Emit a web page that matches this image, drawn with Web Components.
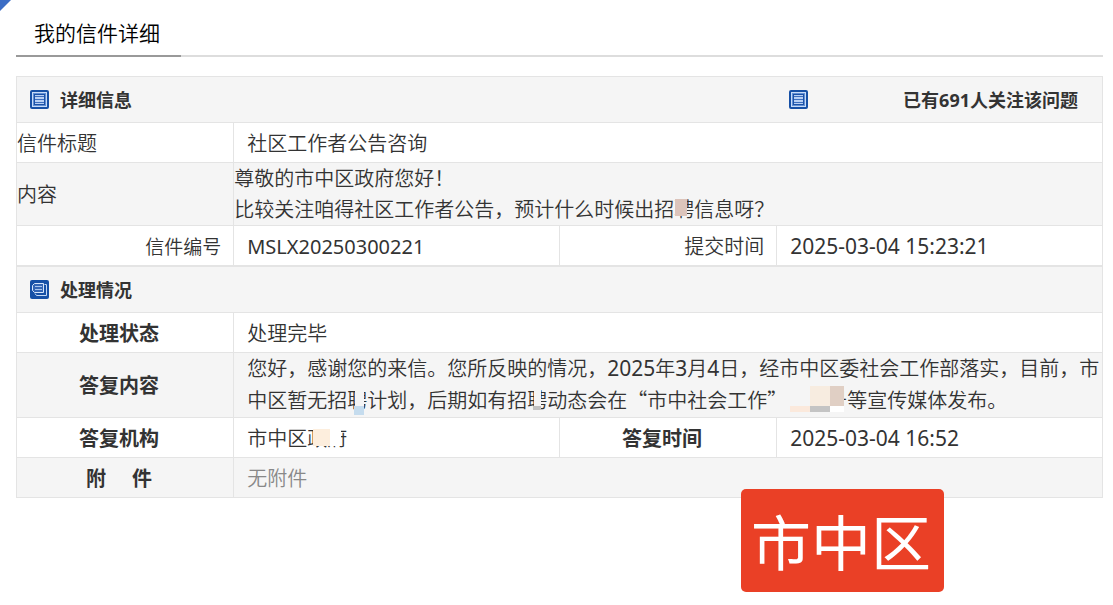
<!DOCTYPE html>
<html lang="zh-CN">
<head>
<meta charset="utf-8">
<title>我的信件详细</title>
<style>
  body { margin: 0; background: #fff; color: #333; font-family: "Noto Sans", "Noto Sans CJK SC", sans-serif; font-size: 20px; line-height: 32px; }
</style>
</head>
<body>
<letter-page>
  <page-title slot="title">我的信件详细</page-title>
  <letter-detail></letter-detail>
  <letter-reply></letter-reply>
  <area-badge slot="badge">市中区</area-badge>
</letter-page>

<script>
const define = (name, html) => customElements.define(name, class extends HTMLElement {
  constructor() {
    super();
    const t = document.createElement('template');
    t.innerHTML = html;
    this.attachShadow({ mode: 'open' }).append(t.content.cloneNode(true));
  }
});

const tableStyle = `<style>
  :host { display: block; }
  table { width: 100%; table-layout: fixed; border-spacing: 0; border: solid #e4e4e4; border-width: 1px 0 0 1px; }
  th, td { box-sizing: border-box; height: 40px; padding: 2px 0 0 13px; border: solid #e4e4e4; border-width: 0 1px 1px 0; text-align: left; font-weight: 350; overflow-wrap: anywhere; }
  tr.head th { height: 46px; padding-top: 0; background: #f5f5f5; border-right-width: 0; font-size: 18px; font-weight: 700; }
  tr.head th:last-child { border-right-width: 1px; padding-left: 12px; }
  tr.head th:first-child { padding-left: 13px; }
  tr.shade > * { background: #f5f5f5; }
  .bar { display: flex; align-items: center; gap: 11px; }
  .bar.apart { justify-content: space-between; padding-right: 24px; }
  th.flush { padding: 2px 0 0; }
  td.message { padding: 0; line-height: 31px; }
  td.reply { padding-top: 0; }
  th.right { text-align: right; padding: 2px 12px 0 0; }
  th.label { text-align: center; font-weight: 700; padding: 2px 12px 0 0; }
  .small { font-size: 19px; }
  .code { font-weight: 400; }
  .digits, time { font-size: 21px; font-weight: 400; line-height: 20px; }
  .quote { font-family: "Noto Sans CJK SC", sans-serif; line-height: 20px; }
  .none { color: #888; }
</style>
<table><colgroup><col style="width:20%"><col style="width:30%"><col style="width:20%"><col style="width:30%"></colgroup>`;

define('letter-page', `<style>
  :host { display: block; position: relative; box-sizing: border-box; min-height: 100vh; padding: 12px 10px 12px 16px; }
  .corner { position: absolute; left: 0; top: 0; width: 11px; height: 11px; background: #3c6dc5; clip-path: polygon(0 0, 100% 0, 0 100%); }
  main { padding-top: 19px; }
</style>
<div class="corner"></div>
<slot name="title"></slot>
<main><slot></slot></main>
<slot name="badge"></slot>`);

define('page-title', `<style>
  :host { display: flex; border-bottom: 2px solid #ddd; }
  h1 { margin: 0 0 -2px; padding: 5px 21px 6px 18px; border-bottom: 2px solid #999; font-size: 21px; line-height: 32px; font-weight: 350; color: #000; }
</style><h1><slot></slot></h1>`);

define('list-icon', `<style>:host { display: block; flex: none; width: 19px; height: 19px; } svg { display: block; }</style>
<svg width="19" height="19" viewBox="0 0 19 19" fill="none">
  <rect width="19" height="19" rx="2" fill="#1650a6"/>
  <rect x="2.5" y="2.5" width="14" height="14" fill="#5f8fd6" stroke="#c8dcf8"/>
  <rect x="4.5" y="4.5" width="10" height="10" fill="#b8d0f4" stroke="#1c51a5"/>
  <path d="M5 6.5h9M5 9.5h9M5 12.5h9" stroke="#3c6fc0"/>
</svg>`);

define('stack-icon', `<style>:host { display: block; flex: none; width: 19px; height: 19px; } svg { display: block; }</style>
<svg width="19" height="19" viewBox="0 0 19 19" fill="none">
  <rect width="19" height="19" rx="2" fill="#1650a6"/>
  <path d="M14.5 4.5h2v11h-10l-1.500-2" stroke="#c3d8f6"/>
  <path d="M4.500 3.500h9v9h-9l-2-2v-5z" fill="#3466b5" stroke="#d6e5fb"/>
  <path d="M5 6.5h7M5 9.5h7" stroke="#a9c5ee"/>
</svg>`);

define('masked-text', `<style>:host { display: inline-block; position: relative; vertical-align: top; }</style><slot></slot>`);

define('color-patch', `<style>
  :host { position: absolute; left: var(--x); top: var(--y); width: var(--w); height: var(--h); background: var(--c); }
</style>`);

define('letter-detail', tableStyle + `
  <tr class="head">
    <th colspan="3"><div class="bar"><list-icon></list-icon>详细信息</div></th>
    <th><div class="bar apart"><list-icon></list-icon><span>已有691人关注该问题</span></div></th>
  </tr>
  <tr><th class="flush" scope="row">信件标题</th><td colspan="3">社区工作者公告咨询</td></tr>
  <tr class="shade">
    <th class="flush" scope="row">内容</th>
    <td class="message" colspan="3">尊敬的市中区政府您好！<br>比较关注咱得社区工作者公告，预计什么时候出招<masked-text>聘<color-patch style="--x:1px;--y:5px;--w:12px;--h:17px;--c:#dcc4bb"></color-patch></masked-text>信息呀？</td>
  </tr>
  <tr>
    <th class="right small" scope="row">信件编号</th><td class="code">MSLX20250300221</td>
    <th class="right" scope="row">提交时间</th><td><time datetime="2025-03-04T15:23:21">2025-03-04 15:23:21</time></td>
  </tr>
</table>`);

define('letter-reply', tableStyle + `
  <tr class="head"><th colspan="4"><div class="bar"><stack-icon></stack-icon>处理情况</div></th></tr>
  <tr><th class="label" scope="row">处理状态</th><td colspan="3">处理完毕</td></tr>
  <tr class="shade">
    <th class="label" scope="row">答复内容</th>
    <td class="reply" colspan="3">您好，感谢您的来信。您所反映的情况，<span class="digits">2025</span>年<span class="digits">3</span>月<span class="digits">4</span>日，<span>经市中区委社会工作部落实，目前，市</span>中区暂无招<masked-text>聘<color-patch style="--x:8px;--y:4px;--w:9px;--h:18px;--c:#f5f5f5"></color-patch><color-patch style="--x:7px;--y:21px;--w:10px;--h:9px;--c:#c5dcee"></color-patch></masked-text>计划，后期如有招<masked-text>聘<color-patch style="--x:7px;--y:4px;--w:7px;--h:17px;--c:#f5f5f5"></color-patch><color-patch style="--x:6px;--y:21px;--w:8px;--h:4px;--c:#c2c2c2"></color-patch></masked-text>动态会在<span class="quote">“</span>市中社会工作<span class="quote">”</span><masked-text>公众号<color-patch style="--x:0px;--y:2px;--w:57px;--h:28px;--c:#f5f5f5"></color-patch><color-patch style="--x:23px;--y:1px;--w:20px;--h:20px;--c:#f7ece0"></color-patch><color-patch style="--x:43px;--y:1px;--w:14px;--h:20px;--c:#e0cfc4"></color-patch><color-patch style="--x:3px;--y:21px;--w:20px;--h:6px;--c:#fbe9dc"></color-patch><color-patch style="--x:23px;--y:21px;--w:20px;--h:6px;--c:#c4c4c4"></color-patch><color-patch style="--x:43px;--y:21px;--w:14px;--h:6px;--c:#fff"></color-patch></masked-text>等宣传媒体发布。</td>
  </tr>
  <tr>
    <th class="label" scope="row">答复机构</th>
    <td>市中区<masked-text>政府<color-patch style="--x:6px;--y:4px;--w:28px;--h:19px;--c:#fff"></color-patch><color-patch style="--x:6px;--y:6px;--w:17px;--h:17px;--c:#fdeedd"></color-patch></masked-text></td>
    <th class="label" scope="row">答复时间</th><td><time datetime="2025-03-04T16:52">2025-03-04 16:52</time></td>
  </tr>
  <tr class="shade"><th class="label" scope="row">附&nbsp;&nbsp;&nbsp;&nbsp;&nbsp;件</th><td class="none" colspan="3">无附件</td></tr>
</table>`);

define('area-badge', `<style>
  :host { display: block; position: relative; width: fit-content; margin: -9px 159px 0 auto; padding: 10px 13px 5px 10px; border-radius: 5px; background: #ea4026; color: #fff; font-size: 60px; line-height: 88px; white-space: nowrap; }
</style><slot></slot>`);
</script>
</body>
</html>
